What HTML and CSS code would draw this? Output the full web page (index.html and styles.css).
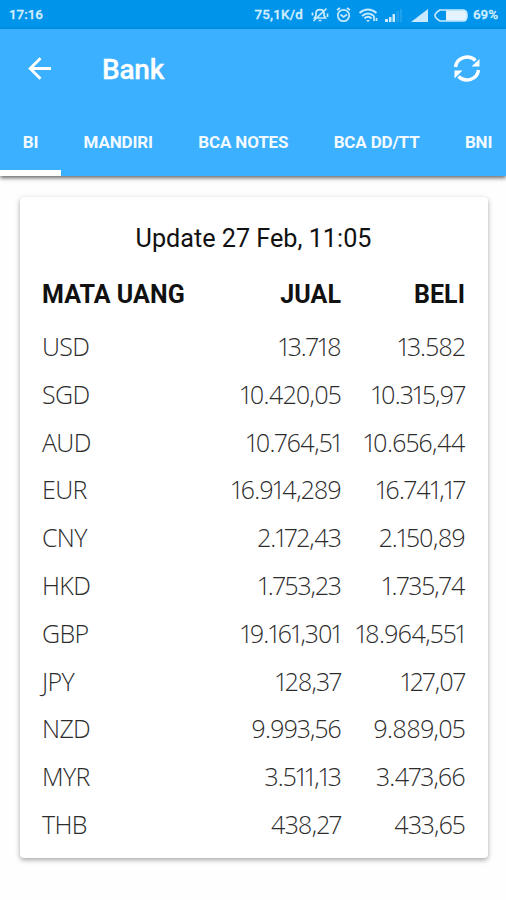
FILE: index.html
```html
<!DOCTYPE html>
<html lang="id">
<head>
<meta charset="utf-8">
<title>Bank</title>
<link rel="stylesheet" href="styles.css">
</head>
<body>
<header class="status">
  <span class="clock">17:16</span>
  <span class="speed">75,1K/d</span>
  <svg class="status-icons" width="160" height="20" viewBox="0 0 160 20" fill="none" stroke="#c8eaff" stroke-width="1.7">
    <path d="M4.500 13L6 10.500V8C6 3.500 14 3.500 14 8V10.500L15.500 13ZM8.500 15.500H11.500M3.500 16L16.500 3.500M2.500 7.500V10.500M17.500 8.500V12"/>
    <circle cx="33.500" cy="10.500" r="5.700"/><path d="M30.500 9.500L33.500 12L37 9.500M27 5L30 3M37 3L40 5"/>
    <path stroke-width="2.100" d="M49.500 8Q58 1 66.500 8M52 11Q58 6 64 11M54.500 13.500Q58 10 61.500 13.500"/><path d="M56 15L58 17L60 15Z" fill="#c8eaff" stroke="none"/><path d="M64 11V16M66.500 13V16"/>
    <g fill="#c8eaff" stroke="none"><path d="M75 14H78V17H75ZM79 12H81.500V17H79ZM82.500 9H85V17H82.500Z"/><path d="M86.500 6H89V17H86.500ZM90 4H92V17H90Z" opacity=".15"/><path d="M101 17L118 4V17Z"/></g>
    <path d="M130 5H153Q157 5 157 10.500Q157 16 153 16H130Q125 13 125 10.500Q125 8 130 5Z"/>
    <path d="M136 5.500H153Q156.500 6 156.500 10.500Q156.500 15 153 15.500H136Z" fill="#e3f4ff" stroke="none"/>
  </svg>
  <span class="percent">69%</span>
</header>
<div class="appbar">
  <div class="toolbar">
    <svg class="back" width="24" height="24" viewBox="0 0 24 24" fill="none" stroke="#fff" stroke-width="2.900"><path d="M23 11.500H2.500M12.500 1.200L2.200 11.500L12.500 21.800"/></svg>
    <h1>Bank</h1>
    <svg class="refresh" width="28" height="28" viewBox="0 0 28 28" fill="none" stroke="#fff" stroke-width="3.400"><path d="M2.500 12A11.700 11.200 0 0 1 22.500 5.500M25.500 15A11.700 11.200 0 0 1 5.500 21.500"/><path d="M26.500 4V11.500H18.500ZM1.500 15.500H9.500L1.500 23.500Z" fill="#fff" stroke="none"/></svg>
  </div>
  <nav class="tabs">
    <span class="tab active">BI</span><span class="tab">MANDIRI</span><span class="tab">BCA NOTES</span><span class="tab">BCA DD/TT</span><span class="tab">BNI</span>
  </nav>
</div>
<main class="card">
  <p class="updated">Update 27 Feb, 11:05</p>
  <table class="rates">
    <thead><tr><th>MATA UANG</th><th>JUAL</th><th>BELI</th></tr></thead>
    <tbody>
      <tr><td>USD</td><td>13.718</td><td>13.582</td></tr>
      <tr><td>SGD</td><td>10.420,05</td><td>10.315,97</td></tr>
      <tr><td>AUD</td><td>10.764,51</td><td>10.656,44</td></tr>
      <tr><td>EUR</td><td>16.914,289</td><td>16.741,17</td></tr>
      <tr><td>CNY</td><td>2.172,43</td><td>2.150,89</td></tr>
      <tr><td>HKD</td><td>1.753,23</td><td>1.735,74</td></tr>
      <tr><td>GBP</td><td>19.161,301</td><td>18.964,551</td></tr>
      <tr><td>JPY</td><td>128,37</td><td>127,07</td></tr>
      <tr><td>NZD</td><td>9.993,56</td><td>9.889,05</td></tr>
      <tr><td>MYR</td><td>3.511,13</td><td>3.473,66</td></tr>
      <tr><td>THB</td><td>438,27</td><td>433,65</td></tr>
    </tbody>
  </table>
</main>
</body>
</html>
```

FILE: styles.css
```css
* { box-sizing: border-box; }
body { margin: 0; height: 900px; overflow: hidden; background: #fefefe; font-family: Roboto, sans-serif; color: #111; }
.status { height: 29px; background: #0094eb; color: #d3eeff; display: flex; align-items: center; font-size: 13.4px; font-weight: 500; padding: 0 8px 0 9px; -webkit-text-stroke: .3px; }
.speed { margin-left: auto; letter-spacing: .2px; }
.status-icons { margin: 0 3px 0 7px; flex: none; }
.appbar { background: #3bb0ff; height: 147px; color: #fff; box-shadow: 0 2px 4px rgba(0,0,0,.6); display: flex; flex-direction: column; }
.toolbar { height: 80px; display: flex; align-items: center; padding: 0 25px 0 28px; }
h1 { margin: 1px 0 0 50px; font-size: 28px; font-weight: 500; line-height: 32px; letter-spacing: -.2px; -webkit-text-stroke: .3px; }
.refresh { margin-left: auto; }
.tabs { height: 67px; display: flex; overflow: hidden; }
.tab { flex: none; padding: 0 22.7px; font-size: 17px; font-weight: 700; line-height: 67px; letter-spacing: -.15px; color: #f2faff; white-space: nowrap; }
.tab.active { border-bottom: 6px solid #fff; }
.card { margin: 21px 18px 0 20px; height: 661px; background: #fff; border-radius: 4px; box-shadow: 0 2px 5px rgba(0,0,0,.35); padding: 23px 23px 0 22px; }
.updated { margin: 0; text-align: center; font-size: 25.2px; line-height: 38px; }
.rates { width: 100%; border-collapse: collapse; table-layout: fixed; margin-top: 7px; }
th, td { padding: 0; text-align: right; white-space: nowrap; }
th:first-child, td:first-child { text-align: left; }
th:first-child { width: 176px; }
th:last-child { width: 124px; }
th { font-size: 25px; font-weight: 700; line-height: 34px; height: 58px; padding-top: 2px; letter-spacing: .05px; }
td { font-family: "Open Sans", sans-serif; font-weight: 300; font-size: 25px; line-height: 47.8px; height: 47.8px; letter-spacing: -.65px; font-feature-settings: "pnum"; color: #2c2c2c; }
```
